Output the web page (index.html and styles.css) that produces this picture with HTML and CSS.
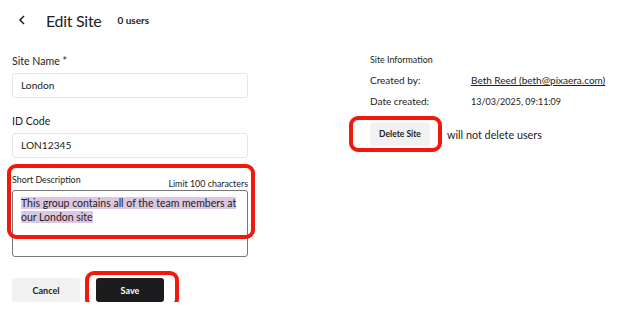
FILE: index.html
```html
<!DOCTYPE html>
<html lang="en">
<head>
  <meta charset="UTF-8">
  <title>Edit Site</title>
  <link rel="stylesheet" href="styles.css">
</head>
<body>

  <div class="header">
    <span class="back">
      <svg width="8" height="10" viewBox="0 0 8 10"><path d="M6 1 L2 5 L6 9" fill="none" stroke="#222" stroke-width="1.6"/></svg>
    </span>
    <h1>Edit Site</h1>
    <span class="count">0 users</span>
  </div>

  <div class="main">
    <div class="form">
      <label class="field-label">Site Name *</label>
      <div class="input">London</div>

      <label class="field-label">ID Code</label>
      <div class="input">LON12345</div>

      <div class="desc">
        <div class="desc-head">
          <span class="small-label">Short Description</span>
          <span class="limit">Limit 100 characters</span>
        </div>
        <div class="textarea">
          <span class="sel">This group contains all of the team members at</span><br>
          <span class="sel">our London site</span>
        </div>
        <div class="mark mark-desc"></div>
      </div>

      <div class="actions">
        <button class="btn btn-light">Cancel</button>
        <div class="save-wrap">
          <button class="btn btn-dark">Save</button>
          <div class="mark mark-save"></div>
        </div>
      </div>
    </div>

    <div class="info">
      <div class="small-label">Site Information</div>
      <div class="row">
        <span class="key">Created by:</span>
        <a class="val" href="#">Beth Reed (beth@pixaera.com)</a>
      </div>
      <div class="row">
        <span class="key">Date created:</span>
        <span class="val date">13/03/2025, 09:11:09</span>
      </div>
      <div class="delete-row">
        <div class="delete-wrap">
          <button class="btn btn-light btn-delete">Delete Site</button>
          <div class="mark mark-delete"></div>
        </div>
        <span class="note">will not delete users</span>
      </div>
    </div>
  </div>

</body>
</html>
```

FILE: styles.css
```css
* {
  box-sizing: border-box;
}

body {
  margin: 0;
  font-family: Lato, "Liberation Sans", sans-serif;
  color: #222;
  background-color: #fff;
  white-space: nowrap;
}

.header {
  display: flex;
  align-items: center;
  height: 40px;
  padding-left: 18px;
}

.back {
  display: flex;
  width: 28px;
}

.header h1 {
  margin: 0;
  font-size: 16px;
  font-weight: 400;
  letter-spacing: -0.3px;
}

.count {
  margin-left: 16px;
  font-size: 10px;
  font-weight: 700;
}

.main {
  display: flex;
  padding-left: 12px;
}

.form {
  flex: none;
  width: 236px;
  padding-top: 14px;
}

.field-label {
  display: block;
  font-size: 10.6px;
  line-height: 14px;
  margin-bottom: 5px;
}

.input {
  height: 25px;
  border: 1px solid #e6e6e6;
  border-radius: 3px;
  font-size: 10.2px;
  line-height: 23px;
  padding-left: 8px;
  margin-bottom: 16px;
}

.desc {
  position: relative;
}

.desc-head {
  display: flex;
  justify-content: space-between;
  align-items: flex-end;
  height: 16px;
  margin-top: 1px;
}

.small-label {
  font-size: 8.9px;
  line-height: 12px;
}

.desc-head .small-label {
  align-self: flex-start;
}

.limit {
  font-size: 8.9px;
  line-height: 12px;
}

.textarea {
  height: 67px;
  border: 1px solid #777;
  border-radius: 3px;
  padding: 5px 8px;
  font-size: 10.5px;
  line-height: 14px;
}

.sel {
  background-color: #dcc7e0;
}

.mark {
  position: absolute;
  border: 4px solid #f2180c;
  border-radius: 9px;
  pointer-events: none;
}

.mark-desc {
  left: -5px;
  right: -7px;
  top: -10px;
  height: 75px;
}

.actions {
  display: flex;
  align-items: center;
  gap: 16px;
  margin-top: 21px;
}

.btn {
  font-family: inherit;
  font-size: 9px;
  font-weight: 700;
  border: none;
  border-radius: 3px;
  height: 24px;
  padding: 0;
  cursor: pointer;
}

.btn-light {
  width: 68px;
  background-color: #f1f1f1;
  color: #222;
}

.btn-dark {
  width: 68px;
  background-color: #1c1c1e;
  color: #fff;
}

.save-wrap,
.delete-wrap {
  position: relative;
  display: flex;
}

.mark-save {
  left: -11px;
  right: -15px;
  top: -7px;
  bottom: -6px;
}

.info {
  flex: none;
  margin-left: 122px;
  padding-top: 14px;
}

.row {
  display: flex;
  font-size: 10px;
  line-height: 13px;
  margin-top: 8px;
}

.key {
  width: 101px;
}

.val {
  color: #222;
}

.date {
  font-size: 9px;
}

a.val {
  text-decoration: underline;
}

.delete-row {
  display: flex;
  align-items: center;
  margin-top: 14px;
}

.btn-delete {
  width: 60px;
  font-size: 8.5px;
}

.mark-delete {
  left: -21px;
  right: -12px;
  top: -6px;
  bottom: -6px;
}

.note {
  margin-left: 17px;
  font-size: 10.8px;
}
```
